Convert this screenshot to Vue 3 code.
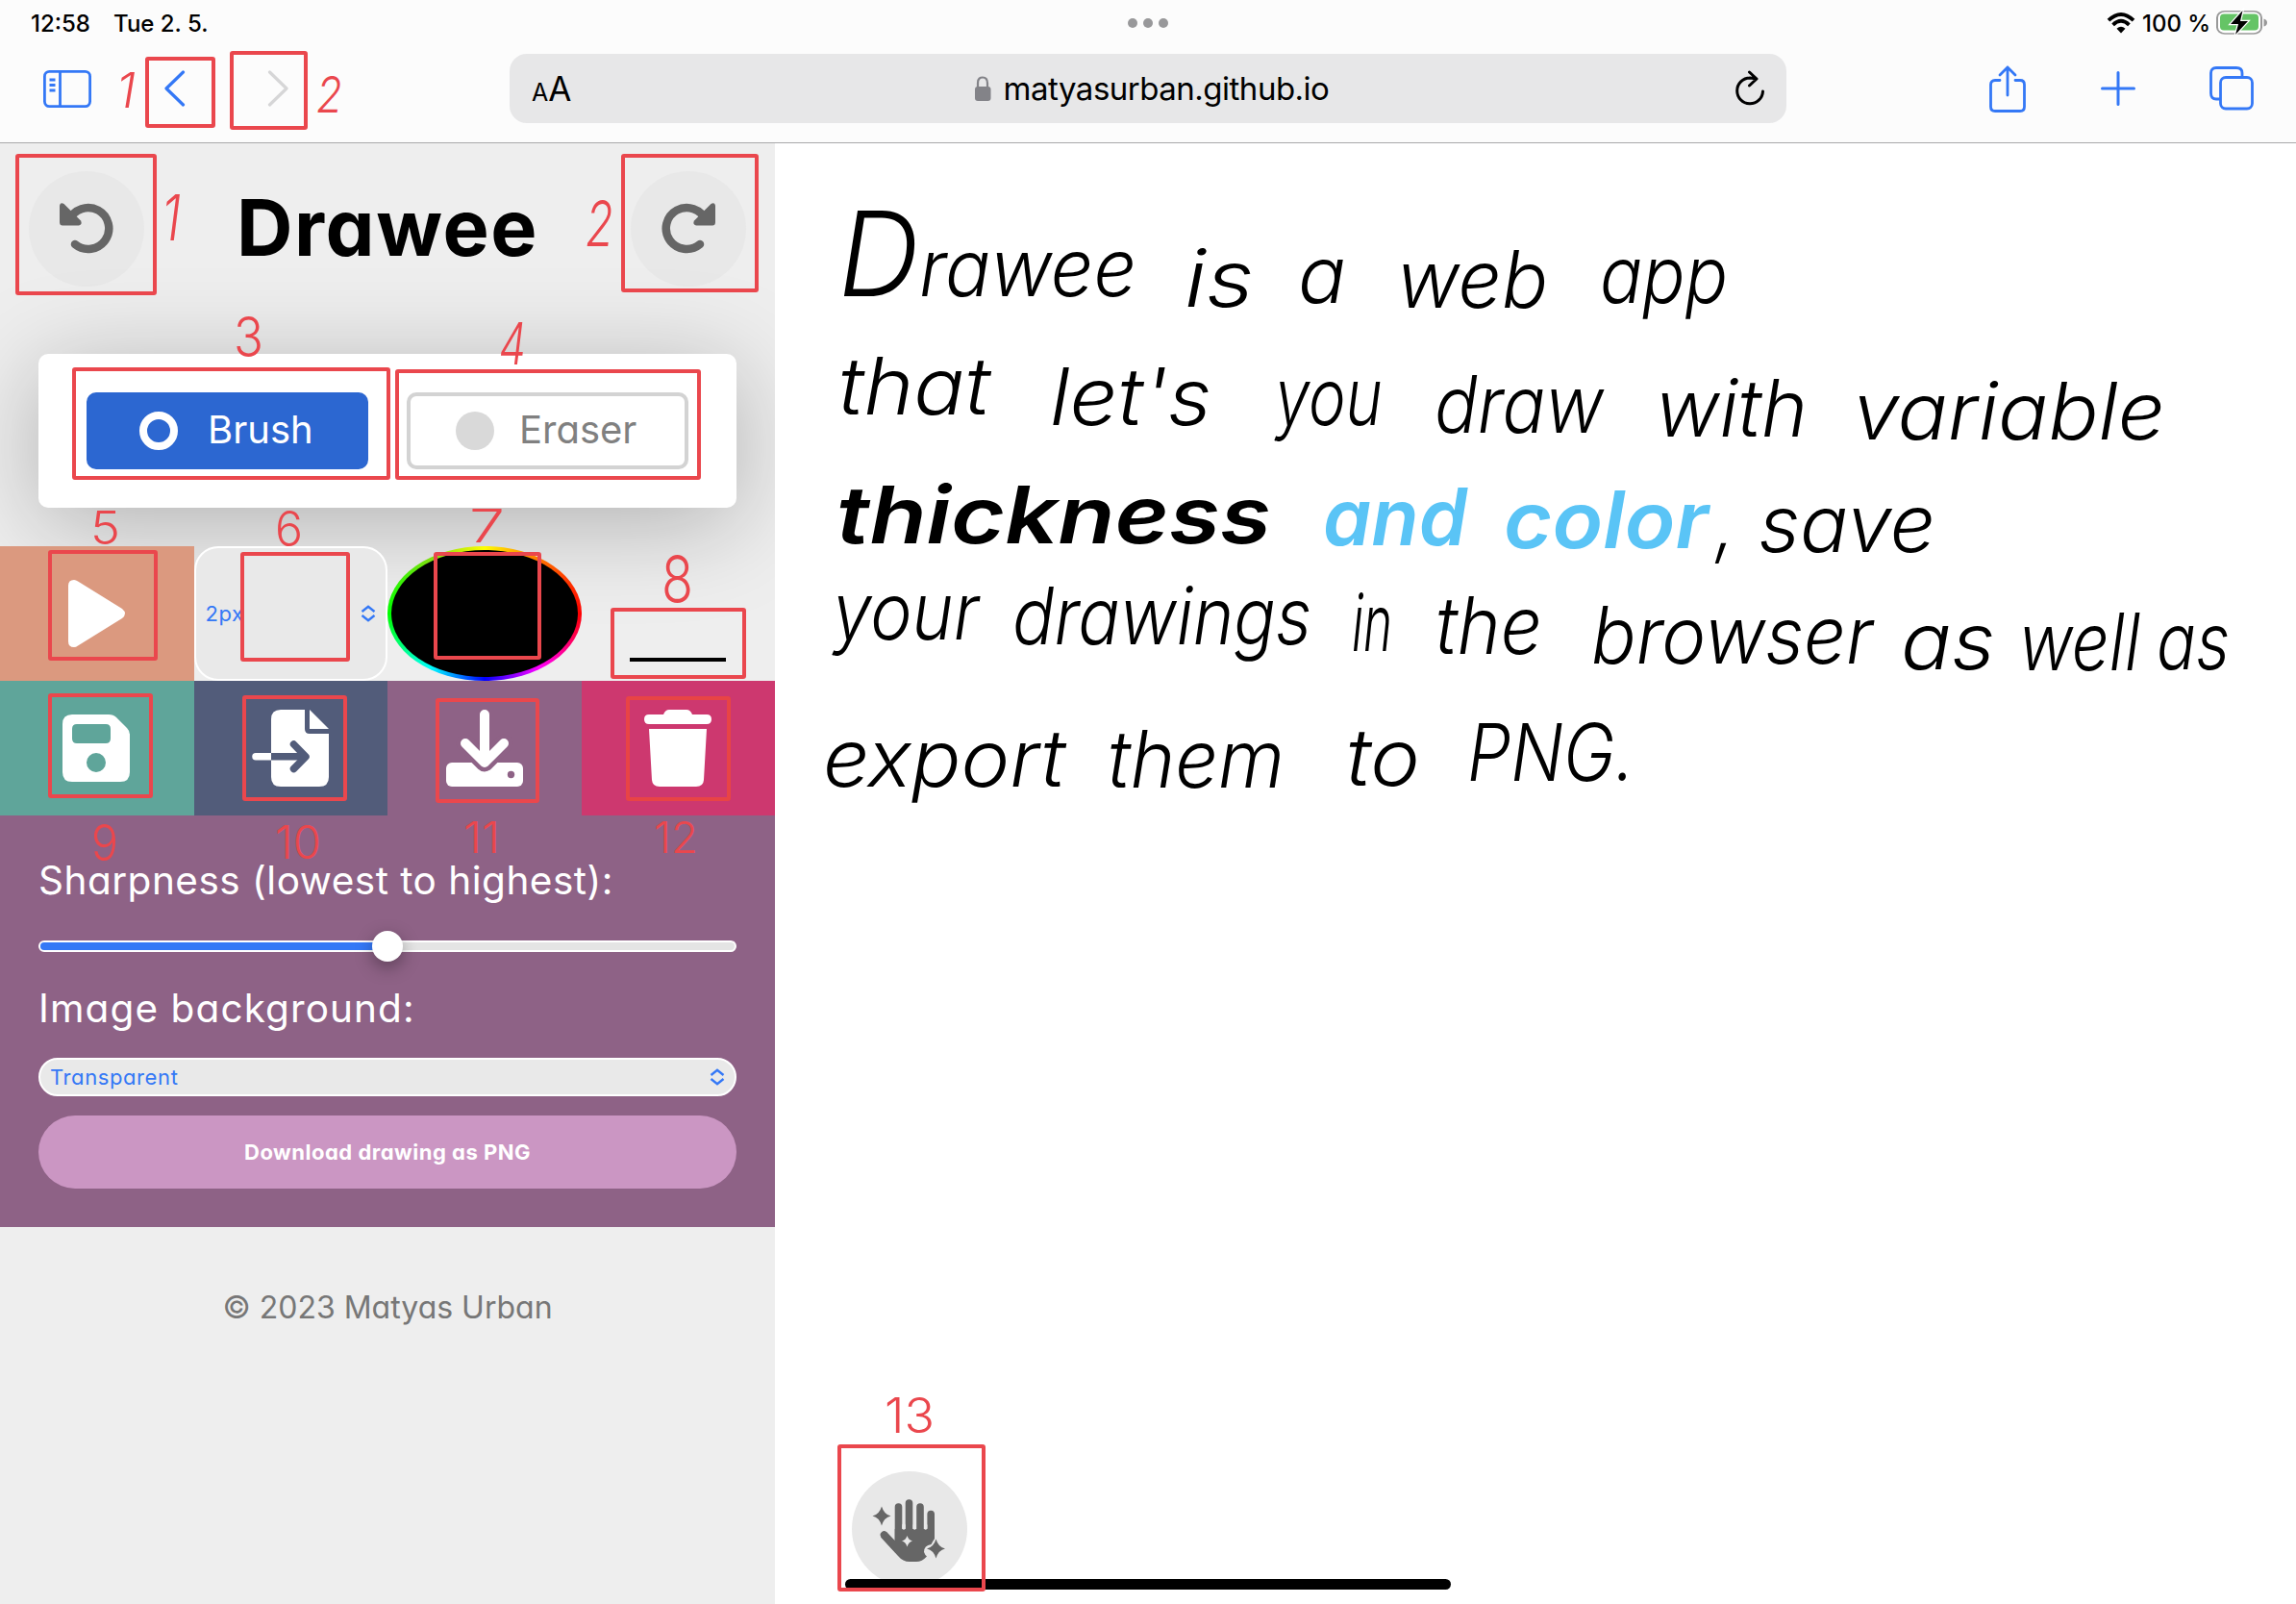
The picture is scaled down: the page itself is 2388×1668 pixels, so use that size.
<script setup>
const ink = [
  // x, baseline, width, text, style, optional size of the first letter
  [872, 308, 310, 'Drawee', 'pen', 122],
  [1232, 319, 72, 'is', 'pen'],
  [1350, 315, 50, 'a', 'pen'],
  [1453, 320, 157, 'web', 'pen'],
  [1664, 315, 133, 'app', 'pen'],
  [872, 431, 158, 'that', 'pen'],
  [1092, 442, 168, "let's", 'pen'],
  [1326, 442, 112, 'you', 'pen'],
  [1492, 450, 176, 'draw', 'pen'],
  [1722, 454, 158, 'with', 'pen'],
  [1927, 457, 325, 'variable', 'pen'],
  [870, 565, 452, 'thickness', 'pen thick'],
  [1376, 567, 150, 'and', 'pen thick blue'],
  [1564, 570, 213, 'color', 'pen thick blue'],
  [1784, 572, 20, ',', 'pen'],
  [1829, 574, 184, 'save', 'pen'],
  [866, 665, 152, 'your', 'pen'],
  [1053, 670, 311, 'drawings', 'pen'],
  [1406, 677, 42, 'in', 'pen'],
  [1493, 680, 111, 'the', 'pen'],
  [1655, 690, 293, 'browser', 'pen'],
  [1977, 696, 98, 'as', 'pen'],
  [2100, 697, 126, 'well', 'pen'],
  [2243, 696, 76, 'as', 'pen'],
  [856, 818, 252, 'export', 'pen'],
  [1152, 819, 184, 'them', 'pen'],
  [1400, 817, 77, 'to', 'pen'],
  [1526, 812, 174, 'PNG.', 'pen'],
]

const marks = [
  // x, baseline, width, text, size
  [121, 112, 20, '1', 50, 'slant'],
  [329, 117, 27, '2', 52, 'slant'],
  [168, 250, 20, '1', 66, 'slant'],
  [609, 256, 29, '2', 66, 'slant'],
  [243, 371, 31, '3', 58],
  [519, 379, 28, '4', 60, 'slant'],
  [94, 566, 31, '5', 48],
  [286, 568, 29, '6', 50],
  [488, 564, 37, '7', 48],
  [688, 627, 33, '8', 68],
  [95, 895, 28, '9', 52],
  [286, 893, 48, '10', 48],
  [482, 887, 38, '11', 45],
  [680, 887, 46, '12', 45],
  [920, 1490, 52, '13', 50],
]

const frames = [
  [153, 61, 69, 70],
  [241, 55, 77, 78],
  [18, 162, 143, 143],
  [648, 162, 139, 140],
  [77, 384, 327, 113],
  [413, 386, 314, 111],
  [52, 574, 110, 111],
  [252, 576, 110, 110],
  [453, 576, 108, 108],
  [637, 634, 137, 70],
  [52, 723, 105, 105],
  [254, 725, 105, 106],
  [455, 728, 104, 105],
  [873, 1504, 150, 149],
]
</script>

<template>
  <div class="screen">
    <header class="chrome">
      <div class="status">
        <span class="time">12:58</span>
        <span class="date">Tue 2. 5.</span>
        <span class="dots"><i /><i /><i /></span>
        <svg class="wifi" width="30" height="22" viewBox="0 0 30 22">
          <g fill="none" stroke="#000" stroke-width="3.8">
            <path d="M2 8.2Q15 -4.200 28 8.200" />
            <path d="M6.600 12.800Q15 4.800 23.400 12.800" />
          </g>
          <path d="M10.500 16.800Q15 12.700 19.500 16.800L15 21.500Z" />
        </svg>
        <span class="pct">100 %</span>
        <svg class="battery" width="54" height="32" viewBox="0 -3 54 32">
          <rect x="1" y="-1.500" width="46" height="29" rx="8" fill="#fff" stroke="#999" stroke-width="2" transform="translate(0 2) scale(1 .8)" />
          <rect x="4" y="3.500" width="40" height="17" rx="4" fill="#65c466" />
          <path d="M49.500 8.500Q53 9.500 53 12.500T49.500 16.500Z" fill="#999" />
          <path d="M27.500 0L15 14H23L20 25L33 11H25Z" stroke="#fff" stroke-width="2.500" paint-order="stroke" />
        </svg>
      </div>
      <div class="nav">
        <svg class="i-side" width="50" height="39" viewBox="0 0 50 39" fill="none" stroke="#3478f6" stroke-width="2.800">
          <rect x="1.400" y="1.400" width="47.200" height="36.200" rx="5" />
          <path d="M17.500 1V38M6.500 10h6M6.500 15.500h6M6.500 21h6" />
        </svg>
        <svg class="i-back" width="22" height="38" viewBox="0 0 22 38" fill="none" stroke="#3478f6" stroke-width="3.200" stroke-linecap="round" stroke-linejoin="round"><path d="M19.500 2L2 19L19.500 36" /></svg>
        <svg class="i-fwd" width="22" height="38" viewBox="0 0 22 38" fill="none" stroke="#d6d6d7" stroke-width="3.200" stroke-linecap="round" stroke-linejoin="round"><path d="M2.500 2L20 19L2.500 36" /></svg>
        <div class="address">
          <span class="aa"><small>A</small>A</span>
          <span class="site">
            <svg width="18" height="26" viewBox="0 0 18 26">
              <path d="M4 12V7.500Q4 1.500 9 1.500T14 7.500V12" fill="none" stroke="#838388" stroke-width="2.200" />
              <rect x="1" y="11" width="16.500" height="15" rx="3" fill="#838388" />
            </svg>
            <b>matyasurban.github.io</b>
          </span>
          <svg class="reload" width="32" height="38" viewBox="0 0 32 38" fill="none" stroke="#000" stroke-width="3" stroke-linecap="round" stroke-linejoin="round">
            <path d="M16 8A13.400 13.400 0 1 0 29.500 22M15.500 2L23 9L15.500 16M22 8.700L16 8" />
          </svg>
        </div>
        <svg class="i-share" width="38" height="49" viewBox="0 0 38 49" fill="none" stroke="#3478f6" stroke-width="2.800" stroke-linecap="round" stroke-linejoin="round">
          <path d="M11 15.500H6Q1.500 15.500 1.500 20V43Q1.500 47.500 6 47.500H32Q36.500 47.500 36.500 43V20Q36.500 15.500 32 15.500H27M19 31V2M11 10L19 2L27 10" />
        </svg>
        <svg class="i-plus" width="36" height="36" viewBox="0 0 36 36" stroke="#3478f6" stroke-width="3" stroke-linecap="round"><path d="M1.500 18H34.500M18 1.500V34.500" /></svg>
        <svg class="i-tabs" width="46" height="46" viewBox="0 0 46 46" fill="none" stroke="#3478f6" stroke-width="2.800">
          <path d="M11 34H7Q1.500 34 1.500 28V7Q1.500 1.500 7 1.500H28Q34 1.500 34 7V11" />
          <rect x="11.500" y="11.500" width="33" height="32.500" rx="5.500" />
        </svg>
      </div>
    </header>

    <div class="body">
      <aside>
        <div class="head">
          <button class="round">
            <svg width="60" height="60" viewBox="0 0 60 60">
              <path d="M12 21A21.500 21.500 0 1 1 18 46" fill="none" stroke="#666" stroke-width="8.500" stroke-linecap="round" />
              <path d="M2 5.500Q3 2 6.500 4L24 21.500Q26 25.500 22 26.500H5Q2 26.500 2 23Z" fill="#666" />
            </svg>
          </button>
          <h1>Drawee</h1>
          <button class="round">
            <svg width="60" height="60" viewBox="0 0 60 60">
              <g transform="translate(60) scale(-1 1)">
                <path d="M12 21A21.500 21.500 0 1 1 18 46" fill="none" stroke="#666" stroke-width="8.500" stroke-linecap="round" />
                <path d="M2 5.500Q3 2 6.500 4L24 21.500Q26 25.500 22 26.500H5Q2 26.500 2 23Z" fill="#666" />
              </g>
            </svg>
          </button>
        </div>
        <div class="card">
          <div class="tool on"><i /><span>Brush</span></div>
          <div class="tool"><i /><span>Eraser</span></div>
        </div>
        <div class="row">
          <div class="cell play"><svg width="64" height="74" viewBox="0 0 64 74"><path d="M2 8Q2 2 8 2Q10 2 12 3.500L58 32Q64 37 58 42L12 70.500Q10 72 8 72Q2 72 2 66Z" fill="#fff" /></svg></div>
          <div class="cell size">
            <span>2px</span>
            <svg width="16" height="18" viewBox="0 0 16 18" fill="none" stroke="#3478f6" stroke-width="2.400"><path d="M1.500 7L8 1.800L14.500 7M1.500 11L8 16.200L14.500 11" /></svg>
          </div>
          <div class="cell wheel"><i /></div>
          <div class="cell sample"><i /></div>
        </div>
        <div class="row">
          <div class="cell save">
            <svg width="70" height="70" viewBox="0 0 70 70" fill="#fff" fill-rule="evenodd"><path d="M10 0H48Q53 0 56 3L67 14Q70 17 70 21V60Q70 70 60 70H10Q0 70 0 60V10Q0 0 10 0ZM15 10Q10 10 10 15V25Q10 30 15 30H45Q50 30 50 25V15Q50 10 45 10ZM35 40A10 10 0 1 0 35 60A10 10 0 1 0 35 40Z" /></svg>
          </div>
          <div class="cell load">
            <svg width="80" height="80" viewBox="0 0 80 80">
              <path d="M30 0H55V20Q55 25 60 25H80V70Q80 80 70 80H30Q20 80 20 70V10Q20 0 30 0ZM60 0L80 20H60Z" fill="#fff" />
              <path d="M4 48.800H22" stroke="#fff" stroke-width="7.500" stroke-linecap="round" />
              <path d="M20 48.800H56" stroke="#525c7a" stroke-width="7.500" />
              <path d="M43.500 36L56 48.800L43.500 61.500" fill="none" stroke="#525c7a" stroke-width="7.500" stroke-linecap="round" stroke-linejoin="round" />
            </svg>
          </div>
          <div class="cell down">
            <svg width="80" height="80" viewBox="0 0 80 80">
              <rect y="55" width="80" height="25" rx="6" fill="#fff" />
              <path d="M20 35L40 55L60 35" fill="none" stroke="#8e6286" stroke-width="19" stroke-linecap="round" stroke-linejoin="round" />
              <path d="M40 5V53M20 35L40 55L60 35" fill="none" stroke="#fff" stroke-width="10" stroke-linecap="round" stroke-linejoin="round" />
              <circle cx="67.500" cy="67.500" r="3.700" fill="#8e6286" />
            </svg>
          </div>
          <div class="cell trash">
            <svg width="70" height="80" viewBox="0 0 70 80" fill="#fff"><path d="M5 5H20Q22 0 26 0H44Q48 0 50 5H65Q70 5 70 10T65 15H5Q0 15 0 10T5 5ZM5 20H65L62 73Q61.500 80 54 80H16Q8.500 80 8 73Z" /></svg>
          </div>
        </div>
        <section class="export">
          <label class="sharp">Sharpness (lowest to highest):</label>
          <div class="slider"><i /><b /></div>
          <label class="bg">Image background:</label>
          <div class="select">
            <span>Transparent</span>
            <svg width="16" height="18" viewBox="0 0 16 18" fill="none" stroke="#3478f6" stroke-width="2.400"><path d="M1.500 7L8 1.800L14.500 7M1.500 11L8 16.200L14.500 11" /></svg>
          </div>
          <button class="png"><span>Download drawing as PNG</span></button>
        </section>
        <footer><span>© 2023 Matyas Urban</span></footer>
      </aside>
      <main>
        <button class="round hand">
          <svg width="120" height="120" viewBox="0 0 120 120">
            <g stroke="#666" stroke-width="7.600" stroke-linecap="round" fill="none">
              <path d="M48.500 37V72M59.500 33V66M71 37V66M82.200 44.500V68M33.500 66L48 82" />
            </g>
            <path d="M44.700 60H86V70Q84 73 82.500 76Q75 77 75 84Q76 87 78 88.500Q73 94 67 94H60Q53 94 48 88L30 68.500L36 63L44.700 72Z" fill="#666" />
            <g fill="#666">
              <path d="M31 36.500Q33.500 45 40.500 46.500Q33.500 48 31 56.500Q28.500 48 21.500 46.500Q28.500 45 31 36.500Z" />
              <path d="M87.500 70.500Q90 79 97 80.500Q90 82 87.500 90.500Q85 82 78 80.500Q85 79 87.500 70.500Z" />
            </g>
            <path d="M57.500 67Q59 71.500 63 72.500Q59 73.500 57.500 78.500Q56 73.500 52 72.500Q56 71.500 57.500 67Z" fill="#e8e8e8" />
            <path d="M54 56V59M65.300 56V59M76.700 56V59" stroke="#e8e8e8" stroke-width="3.400" stroke-linecap="round" />
          </svg>
        </button>
      </main>
    </div>

    <div class="home" />

    <svg class="overlay" width="2388" height="1668" viewBox="0 0 2388 1668">
      <template v-for="(w, i) in ink" :key="'w' + i">
        <text v-if="w[5]" :x="w[0]" :y="w[1]" :textLength="w[2]" lengthAdjust="spacingAndGlyphs" :class="w[4]"><tspan :font-size="w[5]">{{ w[3][0] }}</tspan>{{ w[3].slice(1) }}</text>
        <text v-else :x="w[0]" :y="w[1]" :textLength="w[2]" lengthAdjust="spacingAndGlyphs" :class="w[4]">{{ w[3] }}</text>
      </template>
      <rect v-for="(f, i) in frames" :key="'f' + i" :x="f[0]" :y="f[1]" :width="f[2]" :height="f[3]" rx="1" class="frame" />
      <rect x="653" y="726" width="105" height="105" rx="1" class="frame warm" />
      <text v-for="(m, i) in marks" :key="'m' + i" :x="m[0]" :y="m[1]" :textLength="m[2]" lengthAdjust="spacingAndGlyphs" :class="['mark', m[5]]" :font-size="m[4]">{{ m[3] }}</text>
    </svg>
  </div>
</template>

<style>
body {
  margin: 0;
  background: #fff;
}
</style>

<style scoped>
* {
  box-sizing: border-box;
}
svg {
  display: block;
  flex: none;
}
.screen {
  position: relative;
  width: 2388px;
  height: 1668px;
  overflow: hidden;
  background: #fff;
  display: flex;
  flex-direction: column;
  font-family: Inter, "Open Sans", sans-serif;
}
.chrome {
  height: 149px;
  flex: none;
  background: #fcfcfc;
  border-bottom: 1px solid #a9a9aa;
}
.status {
  height: 48px;
  display: flex;
  align-items: center;
  font-size: 24px;
  font-weight: 500;
  white-space: nowrap;
}
.time {
  width: 64px;
  margin-left: 32px;
}
.date {
  width: 98px;
  margin-left: 22px;
}
.dots {
  display: flex;
  gap: 6px;
  margin-left: 957px;
}
.dots i {
  width: 10px;
  height: 10px;
  border-radius: 50%;
  background: #98989a;
}
.wifi {
  margin-left: 976px;
}
.pct {
  width: 70px;
  margin-left: 7px;
}
.battery {
  margin-left: 7px;
}
.nav {
  height: 88px;
  display: flex;
  align-items: center;
}
.i-side {
  margin-left: 45px;
}
.i-back {
  margin-left: 76px;
}
.i-fwd {
  margin-left: 85px;
}
.address {
  width: 1328px;
  height: 72px;
  margin-left: 230px;
  border-radius: 18px;
  background: #e7e7e8;
  display: flex;
  align-items: center;
  justify-content: space-between;
  padding: 0 22px 0 23px;
}
.aa {
  width: 38px;
  white-space: nowrap;
  font-size: 35px;
  font-weight: 400;
}
.aa small {
  font-size: 25px;
}
.site {
  display: flex;
  align-items: center;
  gap: 13px;
}
.site b {
  font-weight: 400;
  font-size: 33px;
  letter-spacing: -0.500px;
}
.i-share {
  margin-left: 211px;
}
.i-plus {
  margin-left: 78px;
}
.i-tabs {
  margin-left: 77px;
}
.body {
  flex: 1;
  display: flex;
}
aside {
  width: 806px;
  overflow: hidden;
  background: #eee;
  font-feature-settings: "cv11";
}
.head {
  height: 219px;
  padding: 29px 30px 0;
  display: flex;
  justify-content: space-between;
}
.round {
  width: 120px;
  height: 120px;
  border: 0;
  padding: 0;
  border-radius: 50%;
  background: #e8e8e8;
  display: flex;
  align-items: center;
  justify-content: center;
}
h1 {
  margin: 0;
  font-size: 81px;
  line-height: 118px;
  font-weight: 700;
  letter-spacing: 1.500px;
}
.card {
  position: relative;
  height: 160px;
  margin: 0 40px 40px;
  padding: 0 50px;
  background: #fff;
  border-radius: 10px;
  box-shadow: 0 16px 100px rgba(0, 0, 0, 0.26);
  display: flex;
  align-items: center;
  justify-content: space-between;
}
.tool {
  width: 293px;
  height: 80px;
  border: 4px solid #d3d3d3;
  border-radius: 10px;
  display: flex;
  align-items: center;
  padding-left: 47px;
  gap: 26px;
  font-size: 40px;
  font-weight: 400;
  letter-spacing: 0;
  line-height: 68px;
  color: #808080;
}
.tool span {
  padding-bottom: 3px;
}
.tool i {
  width: 40px;
  height: 40px;
  border-radius: 50%;
  background: #d9d9d9;
}
.tool.on {
  padding-left: 51px;
  gap: 31px;
  color: #fff;
  background: #2c67d1;
  border-color: #2c67d1;
}
.tool.on i {
  background: none;
  border: 8px solid #fff;
}
.row {
  position: relative;
  height: 140px;
  display: flex;
}
.cell {
  flex: none;
  width: 25%;
  display: flex;
  align-items: center;
  justify-content: center;
}
.play {
  background: #db997f;
}
.size {
  border: 2px solid #fff;
  border-radius: 25px;
  background: #e9e9e9;
  justify-content: space-between;
  padding: 0 10px;
}
.size,
.select {
  color: #3478f6;
  font-size: 22px;
  letter-spacing: 0.600px;
}
.wheel {
  border-radius: 50%;
  padding: 4px;
  background: conic-gradient(#ff0, #f80 38deg, #f00 90deg, #f0f 135deg, #00f 180deg, #0ff 225deg, #0f0 270deg, #8d1 318deg, #ff0);
}
.wheel i {
  width: 100%;
  height: 100%;
  border-radius: 50%;
  background: #000;
}
.sample {
  align-items: flex-end;
  padding-bottom: 20px;
}
.sample i {
  width: 100px;
  height: 4px;
  background: #000;
}
.save {
  background: #5fa59a;
  padding-right: 1px;
}
.load {
  background: #525c7a;
}
.down {
  background: #8e6286;
}
.trash {
  background: #cd386f;
}
.export {
  height: 428px;
  background: #8e6286;
  padding: 0 40px;
}
.export label {
  display: block;
  color: #fff;
  font-size: 40.500px;
  font-weight: 400;
  line-height: 60px;
  white-space: nowrap;
}
.export .sharp {
  padding-top: 38px;
  letter-spacing: 0.500px;
}
.slider {
  display: flex;
  align-items: center;
  height: 12px;
  margin-top: 32px;
  border: 2px solid #fff;
  border-radius: 6px;
  background: #e4e4e4;
}
.slider i {
  width: 50%;
  height: 8px;
  margin-right: -16px;
  border-radius: 4px 0 0 4px;
  background: #3478f6;
}
.slider b {
  width: 32px;
  height: 32px;
  border-radius: 50%;
  background: #fff;
  box-shadow: 0 6px 18px rgba(0, 0, 0, 0.35);
}
.export .bg {
  margin-top: 29px;
  letter-spacing: 1.100px;
}
.select {
  height: 40px;
  margin-top: 21px;
  padding: 0 10px;
  border: 2px solid #fff;
  border-radius: 20px;
  background: #e9e9e9;
  display: flex;
  align-items: center;
  justify-content: space-between;
}
.png {
  display: block;
  width: 100%;
  height: 76px;
  margin-top: 20px;
  border: 0;
  border-radius: 38px;
  background: #cb96c3;
  color: #fff;
  font: 700 22px Inter, sans-serif;
  letter-spacing: 0.500px;
  font-feature-settings: "cv11";
}
footer {
  padding-top: 59px;
  text-align: center;
  color: #777;
  font-size: 32px;
  line-height: 50px;
}
main {
  flex: 1;
  display: flex;
  align-items: flex-end;
  padding: 0 0 18px 80px;
}
.home {
  position: absolute;
  left: 879px;
  top: 1642px;
  width: 630px;
  height: 11px;
  border-radius: 6px;
  background: #000;
}
.overlay {
  position: absolute;
  left: 0;
  top: 0;
}
.pen {
  font: italic 300 82px Inter, sans-serif;
  font-feature-settings: "cv11";
  fill: #000;
}
.thick {
  font-weight: 600;
}
.blue {
  fill: #5ac4f6;
}
.frame {
  fill: none;
  stroke: #ea474d;
  stroke-width: 4;
}
.warm {
  stroke: #e84445;
}
.mark {
  font-family: Inter, sans-serif;
  font-weight: 300;
  fill: #ea474d;
}
.slant {
  font-style: italic;
}
</style>
